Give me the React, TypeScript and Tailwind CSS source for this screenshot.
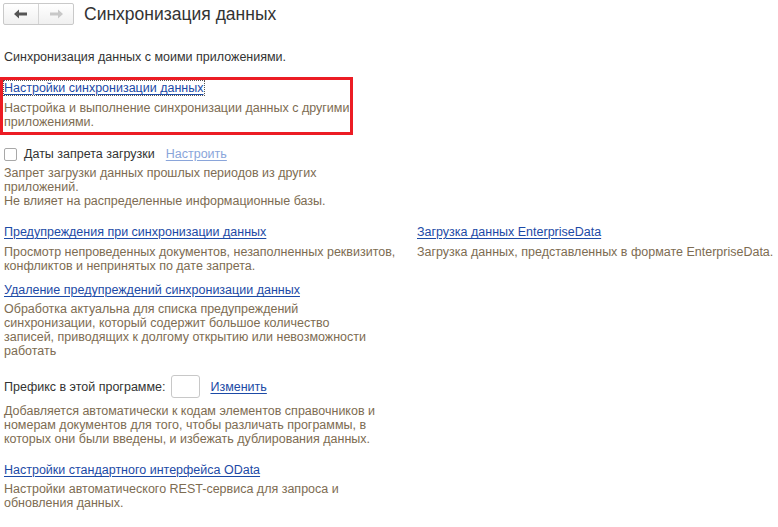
const LINK = "text-[#1c4aa6] underline underline-offset-2 decoration-1";
const NOTE = "text-[#7d6c52]";

const ArrowLeft = ({ color }: { color: string }) => (
  <svg width="14" height="10" viewBox="0 0 14 10">
    <path d="M0 5 L5 0.5 L5 3.5 L13 3.5 L13 6.5 L5 6.5 L5 9.5 Z" fill={color} />
  </svg>
);

const ArrowRight = ({ color }: { color: string }) => (
  <svg width="14" height="10" viewBox="0 0 14 10">
    <path d="M14 5 L9 0.5 L9 3.5 L1 3.5 L1 6.5 L9 6.5 L9 9.5 Z" fill={color} />
  </svg>
);

const App = () => {
  return (
    <div
      className="w-[778px] h-[527px] bg-white overflow-hidden text-[12.5px] leading-[14px] text-[#333]"
      style={{ fontFamily: '"Liberation Sans", Arial, sans-serif' }}
    >
      {/* Header */}
      <div className="flex items-center pt-[3px] pl-[3px] h-[25px]">
        <div className="flex h-[22px] border border-[#c9c9c9] rounded-[2px] bg-gradient-to-b from-white to-[#f0f0f0]">
          <button className="w-[35px] flex items-center justify-center border-r border-[#d4d4d4]">
            <ArrowLeft color="#555" />
          </button>
          <button className="w-[34px] flex items-center justify-center">
            <ArrowRight color="#c8c8c8" />
          </button>
        </div>
        <div className="ml-[10px] text-[17.5px] leading-[22px] text-[#333]">Синхронизация данных</div>
      </div>

      <div className="pl-[4px]">
        <div className="mt-[25px]">Синхронизация данных с моими приложениями.</div>

        {/* Highlighted section */}
        <div className="relative mt-[17px]">
          <div className="absolute left-[-4px] top-[-4px] w-[353px] h-[58px] border-[3px] border-[#ec1c24] pointer-events-none" />
          <a className={`${LINK} outline-1 outline-dotted outline-[#555]`}>Настройки синхронизации данных</a>
          <div className={`${NOTE} mt-[6px] w-[352px]`}>
            Настройка и выполнение синхронизации данных с другими приложениями.
          </div>
        </div>

        {/* Checkbox row */}
        <div className="flex items-center mt-[18px] h-[14px]">
          <div className="w-[13px] h-[13px] border border-[#a8a8a8] rounded-[2px] bg-white" />
          <span className="ml-[7px]">Даты запрета загрузки</span>
          <a className="ml-[11px] text-[#8aa5da] underline underline-offset-2">Настроить</a>
        </div>
        <div className={`${NOTE} mt-[5px]`}>
          <div className="w-[330px]">Запрет загрузки данных прошлых периодов из других приложений.</div>
          <div>Не влияет на распределенные информационные базы.</div>
        </div>

        {/* Two columns */}
        <div className="flex mt-[17px]">
          <div className="w-[413px]">
            <a className={LINK}>Предупреждения при синхронизации данных</a>
            <div className={`${NOTE} mt-[6px] w-[395px]`}>
              Просмотр непроведенных документов, незаполненных реквизитов, конфликтов и непринятых по дате запрета.
            </div>
            <div className="mt-[10px]">
              <a className={LINK}>Удаление предупреждений синхронизации данных</a>
            </div>
            <div className={`${NOTE} mt-[5px] w-[370px]`}>
              Обработка актуальна для списка предупреждений синхронизации, который содержит большое количество записей, приводящих к долгому открытию или невозможности работать
            </div>
          </div>
          <div>
            <a className={LINK}>Загрузка данных EnterpriseData</a>
            <div className={`${NOTE} mt-[6px]`}>Загрузка данных, представленных в формате EnterpriseData.</div>
          </div>
        </div>

        {/* Prefix */}
        <div className="flex items-center mt-[17px]">
          <span>Префикс в этой программе:</span>
          <div className="ml-[6px] w-[29px] h-[23px] border border-[#c8c8c8] rounded-[3px] bg-white" />
          <a className={`${LINK} ml-[10px]`}>Изменить</a>
        </div>
        <div className={`${NOTE} mt-[6px] w-[385px]`}>
          Добавляется автоматически к кодам элементов справочников и номерам документов для того, чтобы различать программы, в которых они были введены, и избежать дублирования данных.
        </div>

        <div className="mt-[17px]">
          <a className={LINK}>Настройки стандартного интерфейса OData</a>
        </div>
        <div className={`${NOTE} mt-[5px] w-[360px]`}>
          Настройки автоматического REST-сервиса для запроса и обновления данных.
        </div>
      </div>
    </div>
  );
};

export default App;
